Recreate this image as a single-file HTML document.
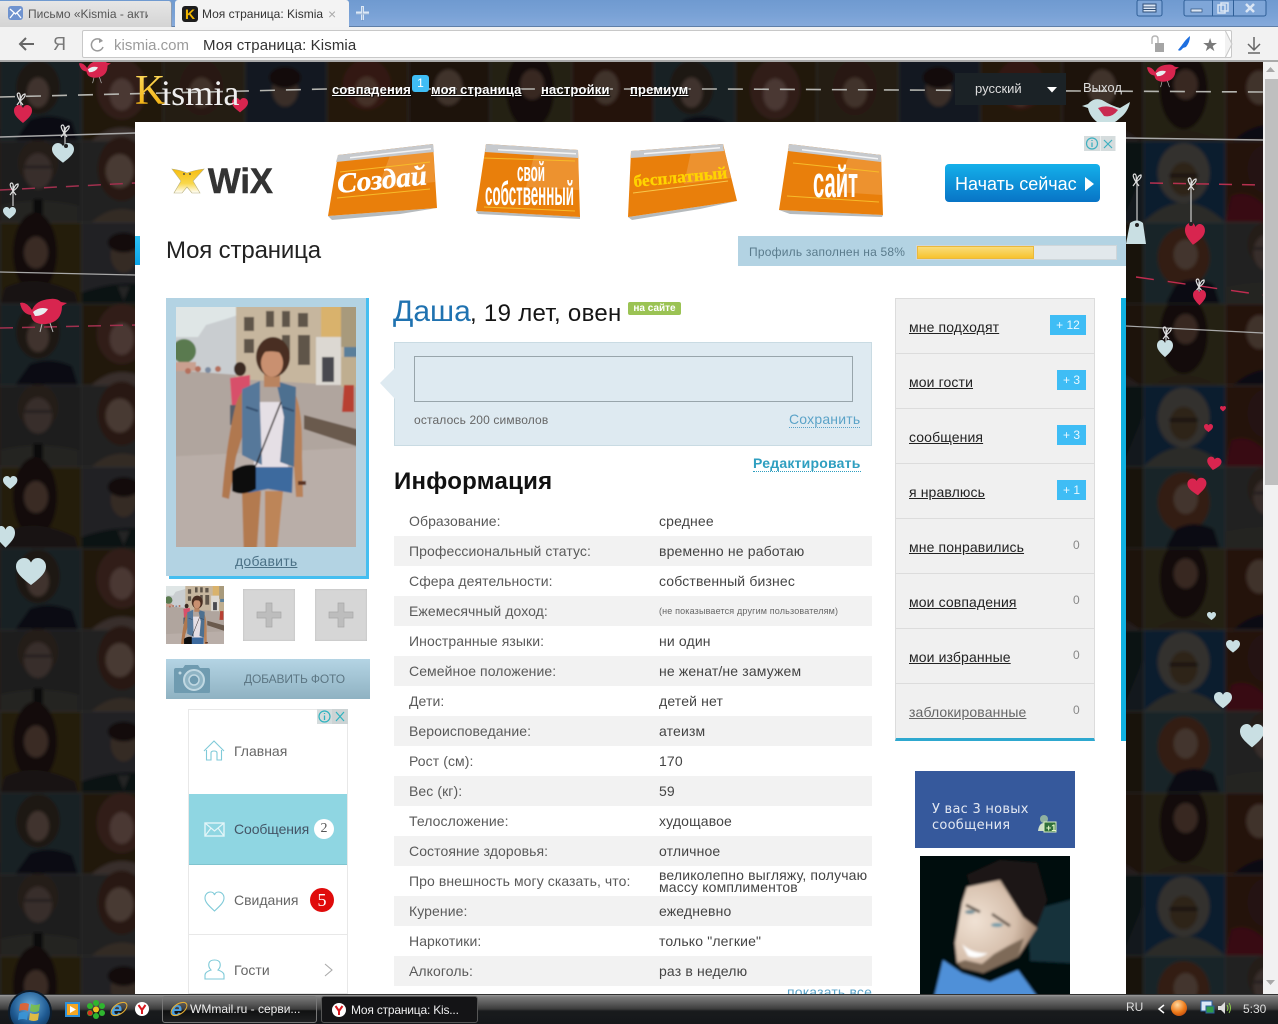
<!DOCTYPE html>
<html lang="ru"><head><meta charset="utf-8"><title>Моя страница: Kismia</title>
<style>
html,body{margin:0;padding:0;width:1278px;height:1024px;overflow:hidden;background:#1a1a1a;font-family:"Liberation Sans","Noto Sans CJK SC",sans-serif;}
*{box-sizing:border-box}
.a{position:absolute;white-space:nowrap}
svg.a{overflow:visible}
.row{position:absolute;left:394px;width:478px;height:30px;line-height:30px;font-size:14px}
.row.g{background:#f2f2f2}
.row b{position:absolute;left:15px;font-weight:normal;color:#5a5a5a;letter-spacing:.08px}
.row i{position:absolute;left:265px;font-style:normal;color:#444;letter-spacing:.15px}
.m{position:absolute;left:896px;width:198px;height:55px;border-bottom:1px solid #dcdcdc}
.m u{position:absolute;left:13px;top:20px;font-size:14px;line-height:17px;color:#222;letter-spacing:.12px}
.bd{position:absolute;right:8px;top:16px;height:20px;background:#3fbdf5;color:#e8f8ff;font-size:12px;line-height:20px;text-align:center}
.z{position:absolute;left:177px;top:18px;font-size:12px;line-height:16px;color:#888}
.n{font-weight:bold;font-size:13px;color:#fff;text-decoration:underline;text-shadow:1px 1px 1px #000;top:81px;line-height:17px;letter-spacing:.18px}
</style></head><body>

<!-- background -->
<svg class="a" style="left:0;top:0" width="1278" height="1024">
<defs>
<pattern id="tiles" patternUnits="userSpaceOnUse" x="0" y="59.5" width="653.5" height="244.5">
<g stroke="#3a3a3a" stroke-width=".6">
<rect x="0" y="0" width="81.7" height="81.5" fill="#1a272c"/><rect x="81.7" y="0" width="81.7" height="81.5" fill="#271c10"/><rect x="163.4" y="0" width="81.7" height="81.5" fill="#2a2212"/><rect x="245.1" y="0" width="81.7" height="81.5" fill="#141e26"/><rect x="326.8" y="0" width="81.7" height="81.5" fill="#2a1a10"/><rect x="408.5" y="0" width="81.7" height="81.5" fill="#221610"/><rect x="490.2" y="0" width="81.7" height="81.5" fill="#2b2512"/><rect x="571.9" y="0" width="81.7" height="81.5" fill="#2c120c"/>
<rect x="0" y="81.5" width="81.7" height="81.5" fill="#222"/><rect x="81.7" y="81.5" width="81.7" height="81.5" fill="#252525"/><rect x="408.5" y="81.5" width="81.7" height="81.5" fill="#0f1215"/><rect x="490.2" y="81.5" width="81.7" height="81.5" fill="#0d2235"/><rect x="571.9" y="81.5" width="81.7" height="81.5" fill="#2a130e"/>
<rect x="0" y="163" width="81.7" height="81.5" fill="#2a2110"/><rect x="81.7" y="163" width="81.7" height="81.5" fill="#262829"/><rect x="408.5" y="163" width="81.7" height="81.5" fill="#1a140c"/><rect x="490.2" y="163" width="81.7" height="81.5" fill="#1c2a2e"/><rect x="571.9" y="163" width="81.7" height="81.5" fill="#262626"/>
</g>
<!-- row 0 -->
<ellipse cx="38" cy="28" rx="22" ry="27" fill="#231c19"/><path d="M15 81 L30 60 Q50 52 72 62 L78 81Z" fill="#0e0f12"/><ellipse cx="38" cy="33" rx="11" ry="15" fill="#4a3b35"/>
<g transform="translate(81.7,0)"><ellipse cx="40" cy="30" rx="25" ry="30" fill="#37231a"/><path d="M10 81 Q40 55 72 81Z" fill="#3f3630"/><ellipse cx="40" cy="35" rx="12" ry="16" fill="#54413a"/></g>
<g transform="translate(163.4,0)"><ellipse cx="38" cy="28" rx="22" ry="28" fill="#2f1f15"/><path d="M8 81 Q40 55 74 81Z" fill="#2c2c20"/><ellipse cx="38" cy="33" rx="12" ry="15" fill="#4c3a30"/></g>
<g transform="translate(245.1,0)"><path d="M10 81 Q40 60 72 81Z" fill="#191c20"/><ellipse cx="40" cy="30" rx="13" ry="17" fill="#43362e"/><ellipse cx="40" cy="18" rx="16" ry="11" fill="#15110f"/></g>
<g transform="translate(326.8,0)"><ellipse cx="40" cy="25" rx="24" ry="25" fill="#3a1d12"/><path d="M8 81 Q40 58 74 81Z" fill="#1a1512"/><ellipse cx="40" cy="32" rx="12" ry="15" fill="#50392e"/></g>
<g transform="translate(408.5,0)"><path d="M5 81 Q40 50 77 81Z" fill="#2a2420"/><ellipse cx="40" cy="28" rx="14" ry="18" fill="#4a3a32"/></g>
<g transform="translate(490.2,0)"><ellipse cx="40" cy="30" rx="24" ry="40" fill="#17110f"/><path d="M8 81 Q40 62 74 81Z" fill="#2a2018"/><ellipse cx="42" cy="25" rx="12" ry="15" fill="#3f2f28"/></g>
<g transform="translate(571.9,0)"><path d="M8 81 Q35 55 81 70 L81 81Z" fill="#0f0f12"/><ellipse cx="34" cy="28" rx="13" ry="17" fill="#4a3a32"/></g>
<!-- row 1 -->
<g transform="translate(0,81.5)"><ellipse cx="38" cy="22" rx="20" ry="23" fill="#2b211c"/><path d="M0 81 L0 65 Q38 55 78 65 L78 81Z" fill="#2b2a27"/><ellipse cx="38" cy="30" rx="14" ry="18" fill="#3f3530"/><rect x="24" y="25" width="28" height="2" fill="#1a1a1a"/><rect x="33" y="58" width="10" height="23" fill="#0c0e10"/></g>
<g transform="translate(81.7,81.5)"><ellipse cx="40" cy="28" rx="24" ry="32" fill="#2e1e16"/><path d="M10 81 Q40 55 72 81Z" fill="#3a322c"/><ellipse cx="38" cy="30" rx="14" ry="17" fill="#53423a"/></g>
<g transform="translate(490.2,81.5)"><path d="M0 81 Q40 42 81 81Z" fill="#33312e"/><ellipse cx="40" cy="32" rx="26" ry="30" fill="#3a3835"/><ellipse cx="40" cy="38" rx="14" ry="17" fill="#35291f"/><rect x="26" y="33" width="28" height="3" fill="#15110f"/></g>
<g transform="translate(571.9,81.5)"><ellipse cx="40" cy="28" rx="18" ry="24" fill="#2a1512"/><path d="M0 81 L6 55 Q30 45 50 81Z" fill="#401012"/></g>
<g transform="translate(408.5,81.5)"><path d="M60 81 L81 81 L81 30Z" fill="#141a20"/></g>
<!-- row 2 -->
<g transform="translate(0,163)"><ellipse cx="35" cy="30" rx="22" ry="40" fill="#15100e"/><path d="M0 81 L5 65 Q35 50 75 70 L78 81Z" fill="#1c1412"/><ellipse cx="36" cy="30" rx="12" ry="16" fill="#43332c"/></g>
<g transform="translate(81.7,163)"><path d="M0 81 L0 70 Q40 55 81 65 L81 81Z" fill="#101218"/><path d="M36 64 L42 78 L48 64Z" fill="#2a2a2a"/><ellipse cx="42" cy="32" rx="13" ry="18" fill="#3e3129"/><ellipse cx="42" cy="20" rx="16" ry="10" fill="#141110"/></g>
<g transform="translate(490.2,163)"><ellipse cx="40" cy="35" rx="26" ry="30" fill="#3a2418"/><path d="M22 81 L32 62 Q50 52 70 62 L76 81Z" fill="#0f0f12"/><ellipse cx="42" cy="32" rx="12" ry="15" fill="#4d3c34"/></g>
<g transform="translate(571.9,163)"><ellipse cx="42" cy="22" rx="20" ry="23" fill="#2b211c"/><path d="M0 81 L0 65 Q38 55 81 65 L81 81Z" fill="#2b2a27"/><ellipse cx="42" cy="30" rx="14" ry="18" fill="#3f3530"/><rect x="28" y="25" width="28" height="2" fill="#1a1a1a"/></g>
</pattern>
<filter id="bl"><feGaussianBlur stdDeviation="1.5"/></filter>
<path id="h" d="M10 18 C2 12 0 9 0 5.5 C0 2 3 0 5.5 0 C7.5 0 9 1 10 3 C11 1 12.5 0 14.5 0 C17 0 20 2 20 5.5 C20 9 18 12 10 18Z"/>
<g id="bird"><path d="M0 5 Q6 3 12 12 Q16 2 30 1 Q37 0 41 4 L47 5 L42 8 Q42 24 26 26 Q12 27 11 17 Q2 16 0 5Z"/><path d="M13 14 Q20 8 28 11 Q24 18 15 18Z" fill="#e8eef0"/><path d="M22 26 L20 34 M30 25 L33 34" stroke="#bbb" fill="none"/></g>
<g id="bow" fill="none" stroke="#ddd" stroke-width="1.2"><path d="M0 8 Q-5 0 -1 0 Q1 1 0 8 Q2 1 5 1 Q6 4 0 8 M0 8 L-3 12 M0 8 L3 12"/></g>
</defs>
<rect x="-10" y="50" width="1290" height="950" fill="url(#tiles)" filter="url(#bl)"/>
<rect y="62" width="1263" height="932" fill="#000" opacity=".12"/>
<g fill="none">
<path d="M0 97 L326 89 L720 89 L1263 92" stroke="#b5b5b0" stroke-width="1.6" stroke-dasharray="15 11"/>
<path d="M0 137 L135 133" stroke="#a8a8a8" stroke-width="1.5"/>
<path d="M1126 138 L1263 140" stroke="#a8a8a8" stroke-width="1.5"/>
<path d="M0 190 L135 183" stroke="#a0304e" stroke-width="1.5" stroke-dasharray="13 9"/>
<path d="M1150 183 L1263 185" stroke="#b5304f" stroke-width="1.5" stroke-dasharray="13 10"/>
<path d="M0 272 L135 275" stroke="#a8a8a8" stroke-width="1.3"/>
<path d="M0 328 L135 325" stroke="#a0304e" stroke-width="1.5" stroke-dasharray="13 9"/>
<path d="M1136 277 L1263 295" stroke="#c02c50" stroke-width="1.4" stroke-dasharray="18 14"/>
<path d="M1126 326 L1263 333" stroke="#a8a8a8" stroke-width="1.2"/>
<path d="M20 95 L21 106 M65 127 L65 145 M13 186 L13 206 M1137 178 L1137 222 M1191 182 L1191 226 M1199 282 L1199 292 M1166 330 L1166 342" stroke="#ccc" stroke-width="1.2"/>
</g>
<use href="#bow" transform="translate(20,93)"/><use href="#bow" transform="translate(64,125)"/><use href="#bow" transform="translate(13,183)"/><use href="#bow" transform="translate(1136,174)"/><use href="#bow" transform="translate(1191,178)"/><use href="#bow" transform="translate(1199,279)"/><use href="#bow" transform="translate(1166,327)"/>
<g fill="#d8254f">
<use href="#h" transform="translate(14,105) scale(.9,1)"/>
<use href="#bird" transform="translate(20,298)"/>
<use href="#bird" transform="translate(79,60) scale(.68)"/>
<use href="#bird" transform="translate(1147,64) scale(.68)"/>
<use href="#h" transform="translate(1186,222) rotate(8) scale(1,1.2)"/>
<use href="#h" transform="translate(1193,290) scale(.65,.85)"/>
<use href="#h" transform="translate(1220,406) scale(.3)"/>
<use href="#h" transform="translate(1204,424) scale(.45)"/>
<use href="#h" transform="translate(1208,456) rotate(10) scale(.72)"/>
<use href="#h" transform="translate(1187,479) rotate(-5) scale(.95)"/>
<use href="#h" transform="translate(232,98) scale(.8)"/>
</g>
<g fill="#c9dfe3">
<use href="#h" transform="translate(52,143) scale(1.1)"/>
<use href="#h" transform="translate(3,207) scale(.65)"/>
<use href="#h" transform="translate(3,476) scale(.72)"/>
<use href="#h" transform="translate(-4,526) scale(.95,1.2)"/>
<use href="#h" transform="translate(16,558) scale(1.5)"/>
<use href="#h" transform="translate(1157,340) scale(.8,.95)"/>
<use href="#h" transform="translate(1207,612) scale(.45)"/>
<use href="#h" transform="translate(1226,640) scale(.7)"/>
<use href="#h" transform="translate(1214,692) scale(.9)"/>
<use href="#h" transform="translate(1240,724) scale(1.2,1.3)"/>
<path d="M1130 223 Q1137 218 1143 223 L1146 244 L1126 244Z"/>
</g>
<!-- pale bird by logout -->
<path d="M1082 106 L1088 104 Q1094 97 1102 100 Q1112 106 1120 108 L1130 102 Q1128 112 1120 118 Q1110 128 1100 124 Q1090 118 1088 108Z" fill="#c9e0e2"/>
<path d="M1098 108 Q1108 104 1118 110 Q1112 118 1104 116Z" fill="#c92a50"/>
<circle cx="66" cy="146" r="2" fill="#222"/><circle cx="1137" cy="225" r="2" fill="#222"/><circle cx="1191" cy="224" r="2" fill="#222"/>
</svg>

<!-- browser chrome -->
<div class="a" style="left:0;top:0;width:1278px;height:27px;background:linear-gradient(#6f9ad0,#7aa2d6 60%,#86aadb);border-bottom:1px solid #5f7fa8"></div>
<div class="a" style="left:0;top:1px;width:172px;height:26px;background:linear-gradient(#e6e6e6,#d4d4d4);border-right:1px solid #8a9ab0;border-radius:0 3px 0 0"></div>
<div class="a" style="left:175px;top:0;width:174px;height:28px;background:#f3f3f3;border-radius:3px 3px 0 0"></div>
<div class="a" style="left:0;top:27px;width:1278px;height:35px;background:#f2f2f2;border-bottom:2px solid #a9a9a9"></div>
<div class="a" style="left:28px;top:6px;font-size:12px;line-height:16px;color:#555;width:120px;overflow:hidden">Письмо «Kismia - акти</div>
<div class="a" style="left:202px;top:6px;font-size:12px;line-height:16px;color:#333">Моя страница: Kismia</div>
<div class="a" style="left:182px;top:6px;width:16px;height:16px;background:#1c1c1c;border-radius:3px;color:#f0b400;font:bold 14px/16px 'Liberation Sans',sans-serif;text-align:center">K</div>
<div class="a" style="left:328px;top:6px;font-size:14px;line-height:16px;color:#aaa">×</div>
<div class="a" style="left:82px;top:30px;width:1150px;height:28px;background:#fff;border:1px solid #c8c8c8;border-radius:2px"></div>
<div class="a" style="left:114px;top:37px;font-size:15px;line-height:18px;color:#9b9b9b">kismia.com</div>
<div class="a" style="left:203px;top:37px;font-size:15px;line-height:18px;color:#333;letter-spacing:.1px">Моя страница: Kismia</div>
<div class="a" style="left:53px;top:34px;font-size:18px;line-height:20px;color:#777">Я</div>
<svg class="a" style="left:0;top:0" width="1278" height="62">
<rect x="8" y="6" width="15" height="14" rx="3" fill="#6f93cf"/><path d="M10 9 L15.5 14 L21 9 M10 18 L14 13 M21 18 L17 13" stroke="#fff" fill="none" stroke-width="1.3"/>
<path d="M356 13 H369 M362.5 6 V20" stroke="#dce8f6" stroke-width="3"/><path d="M356 13 H369 M362.5 6 V20" stroke="#5f86b8" stroke-width="1" fill="none" transform="translate(0,1)" opacity=".5"/>
<g fill="none" stroke="#666" stroke-width="2"><path d="M34 44 H20 M26 38 L20 44 L26 50"/></g>
<path d="M102 41 A6 6 0 1 0 103 47" fill="none" stroke="#999" stroke-width="1.5"/><path d="M99 38 L103 41 L99 43Z" fill="#999"/>
<rect x="1155" y="43" width="9" height="9" fill="#a5a5a5"/><path d="M1152 44 V39 Q1152 36 1155 36 Q1158 36 1158 39 V43" fill="none" stroke="#b5b5b5" stroke-width="1.4"/>
<path d="M1190 37 L1185 47 L1182 45Z" fill="#1e6fe0"/><path d="M1190 36 Q1186 39 1182 45 L1178 50 Q1180 52 1183 48 L1186 47 Q1190 42 1190 36Z" fill="#1e6fe0"/>
<text x="1202" y="51" font-size="18" fill="#7a7a7a" font-family="DejaVu Sans">★</text>
<path d="M1254 37 V49 M1248 44 L1254 50 L1260 44 M1248 53 H1260" stroke="#666" fill="none" stroke-width="1.5"/>
<path d="M1225 30 L1232 44 L1225 58" fill="#f2f2f2" stroke="#c8c8c8"/>
<g stroke="#2f5f97" fill="#7fa6d8">
<rect x="1137" y="0" width="25" height="16" rx="2"/><rect x="1184" y="0" width="82" height="16" rx="2"/>
</g>
<path d="M1143 4 H1156 V12 H1143Z M1143 7 H1156 M1143 9.5 H1156" fill="#dbe6f4" stroke="#2f4f77"/>
<path d="M1212.500 0 V16 M1233.500 0 V16" stroke="#2f5f97"/>
<rect x="1191" y="9" width="11" height="3" fill="#dbe6f4" stroke="#2f4f77" stroke-width=".7"/>
<rect x="1218" y="5" width="7" height="8" fill="none" stroke="#dbe6f4" stroke-width="1.5"/><rect x="1221" y="3" width="7" height="8" fill="none" stroke="#dbe6f4" stroke-width="1.5"/>
<path d="M1246 4 L1254 12 M1254 4 L1246 12" stroke="#dbe6f4" stroke-width="2.5"/>
</svg>

<!-- scrollbar -->
<div class="a" style="left:1263px;top:62px;width:15px;height:932px;background:#f1f1f1"></div>
<div class="a" style="left:1265px;top:79px;width:13px;height:406px;background:#bfbfbf"></div>
<svg class="a" style="left:1263px;top:62px" width="15" height="932"><path d="M7.500 5 L12 10 H3Z M3 918 H12 L7.500 923Z" fill="#a8a8a8"/></svg>

<!-- site header -->
<div class="a" style="left:135px;top:68px;font:42px/46px 'Liberation Serif',serif;color:#f4c20d;background:linear-gradient(#ffe066,#f0a800);-webkit-background-clip:text;background-clip:text;-webkit-text-fill-color:transparent">K</div>
<div class="a" style="left:161px;top:73px;font:36px/40px 'Liberation Serif',serif;color:#eee;letter-spacing:.1px">ismia</div>
<div class="a n" style="left:332px">совпадения</div>
<div class="a" style="left:412px;top:75px;width:17px;height:17px;background:#3fbdf5;border-radius:3px;color:#fff;font-size:12px;line-height:17px;text-align:center">1</div>
<div class="a n" style="left:431px">моя страница</div>
<div class="a n" style="left:541px">настройки</div>
<div class="a n" style="left:630px">премиум</div>
<div class="a" style="left:955px;top:73px;width:111px;height:32px;background:#1b2226"></div>
<div class="a" style="left:975px;top:81px;font-size:13px;line-height:16px;color:#ddd">русский</div>
<svg class="a" style="left:1047px;top:87px" width="10" height="6"><path d="M0 0 H10 L5 5.500Z" fill="#fff"/></svg>
<div class="a" style="left:1083px;top:80px;font-size:13px;line-height:16px;color:#ddd">Выход</div>

<!-- page -->
<div class="a" style="left:135px;top:122px;width:991px;height:872px;background:#fff"></div>

<!-- banner -->
<svg class="a" style="left:0;top:0" width="1278" height="240">
<defs>
<linearGradient id="wg" x1="0" y1="0" x2="0" y2="1"><stop offset="0" stop-color="#f6bc10"/><stop offset=".6" stop-color="#f9d84a"/><stop offset="1" stop-color="#fff"/></linearGradient>
<linearGradient id="btn" x1="0" y1="0" x2="0" y2="1"><stop offset="0" stop-color="#14b0ea"/><stop offset="1" stop-color="#0874c6"/></linearGradient>
</defs>
<path d="M172 169 Q180 170 187 173 Q195 170 204 169 L193 181 L200 193 L192 193 L187 187 L182 193 L174 193 L181 181Z" fill="url(#wg)" stroke="#b9b07a" stroke-width=".6"/>
<circle cx="184" cy="174" r="1" fill="#554"/><circle cx="190" cy="174" r="1" fill="#554"/>
<text x="208" y="193" font-size="35" font-weight="bold" fill="#333" stroke="#333" stroke-width=".5" font-family="Liberation Sans" textLength="65" lengthAdjust="spacingAndGlyphs">WiX</text>

<!-- card1 -->
<path d="M328 216 L437 208 L400 214 L332 220Z" fill="#b5babd"/>
<path d="M338 155 L433 144 L437 208 L328 216Z" fill="#e97f0b"/>
<path d="M392 150 L433 145 L435 182 L378 188Z" fill="#ee9a3e" opacity=".75"/>
<path d="M338 155 L433 144 L434 152 L336 162Z" fill="#c6c9cd"/><path d="M350 157 L431 148 L431 149.500 L350 158.500Z" fill="#fff" opacity=".8"/>
<path d="M340 172 L430 162 M337 198 L430 189" stroke="#f7bb2a" stroke-width="1"/>
<text transform="translate(338,193) rotate(-5.500)" font-family="Liberation Serif" font-size="28" font-weight="bold" font-style="italic" fill="#fff" stroke="#fff" stroke-width=".4" textLength="90" lengthAdjust="spacingAndGlyphs">Создай</text>
<!-- card2 -->
<path d="M476 211 L580 217 L580 219 L478 214Z" fill="#b5babd"/>
<path d="M486 144 L578 150 L580 217 L476 211Z" fill="#e97f0b"/>
<path d="M536 148 L578 150 L579 190 L526 187Z" fill="#ee9a3e" opacity=".7"/>
<path d="M486 144 L578 150 L578 158 L485 152Z" fill="#c6c9cd"/><path d="M498 149 L576 153 L576 154.500 L498 150.500Z" fill="#fff" opacity=".8"/>
<path d="M484 158 L575 161 M484 207 L575 211" stroke="#f7bb2a" stroke-width="1"/>
<text x="517" y="181" font-family="Liberation Sans" font-size="27" font-weight="bold" fill="#fff" textLength="28" lengthAdjust="spacingAndGlyphs">свой</text>
<text x="485" y="205" font-family="Liberation Sans" font-size="33" font-weight="bold" fill="#fff" textLength="89" lengthAdjust="spacingAndGlyphs">собственный</text>
<!-- card3 -->
<path d="M628 217 L737 201 L700 209 L632 220Z" fill="#b5babd"/>
<path d="M631 151 L723 144 L737 201 L628 217Z" fill="#e97f0b"/>
<path d="M692 147 L723 144 L731 178 L684 184Z" fill="#ee9a3e" opacity=".7"/>
<path d="M631 151 L723 144 L724 151 L631 158Z" fill="#c6c9cd"/><path d="M644 153 L720 147 L720 148.500 L644 154.500Z" fill="#fff" opacity=".8"/>
<path d="M633 193 L728 181" stroke="#f7c74a" stroke-width="1"/>
<text transform="translate(634,187) rotate(-5.500)" font-family="Liberation Serif" font-size="17" font-weight="bold" fill="#ffd400" stroke="#ffd400" stroke-width=".3" textLength="94" lengthAdjust="spacingAndGlyphs">бесплатный</text>
<!-- card4 -->
<path d="M779 210 L883 215 L882 217 L790 214Z" fill="#b5babd"/>
<path d="M789 144 L881 155 L883 215 L779 210Z" fill="#e97f0b"/>
<path d="M850 152 L881 155 L882 195 L836 192Z" fill="#ee9a3e" opacity=".7"/>
<path d="M789 144 L881 155 L881 162 L788 151Z" fill="#c6c9cd"/><path d="M802 149 L878 158 L878 159.500 L802 150.500Z" fill="#fff" opacity=".8"/>
<path d="M793 163 L879 172 M787 196 L879 202" stroke="#f7bb2a" stroke-width="1"/>
<text x="813" y="197" font-family="Liberation Sans" font-size="44" font-weight="bold" fill="#fff" textLength="45" lengthAdjust="spacingAndGlyphs">сайт</text>
<!-- button -->
<rect x="945" y="164" width="155" height="38" rx="4" fill="url(#btn)"/>
<path d="M1085 177 L1094 184 L1085 191Z" fill="#fff"/>
<text x="955" y="190" font-family="Liberation Sans" font-size="18" fill="#fff">Начать сейчас</text>
<!-- adchoices -->
<rect x="1084" y="136" width="16" height="15" fill="#d5dcdd"/><rect x="1100.500" y="136" width="15" height="15" fill="#d5dcdd"/>
<circle cx="1092" cy="143.500" r="5.500" fill="none" stroke="#3fb0c0" stroke-width="1.2"/><path d="M1092 140 V141 M1092 142.500 V147" stroke="#3fb0c0" stroke-width="1.3"/>
<path d="M1104 140 L1112 148 M1112 140 L1104 148" stroke="#3fb0c0" stroke-width="1.2"/>
</svg>

<!-- title -->
<div class="a" style="left:135px;top:236px;width:5px;height:29px;background:linear-gradient(#2ec2f5,#0aa4e8)"></div>
<div class="a" style="left:166px;top:237px;font-size:24px;line-height:28px;color:#222;letter-spacing:-.15px">Моя страница</div>
<div class="a" style="left:738px;top:236px;width:388px;height:30px;background:#b3d3e3"></div>
<div class="a" style="left:749px;top:245px;font-size:12px;line-height:15px;color:#5a7b8c;letter-spacing:.22px">Профиль заполнен на 58%</div>
<div class="a" style="left:916px;top:245px;width:201px;height:15px;background:#e2e8ec;border:1px solid #cfd6da"></div>
<div class="a" style="left:917px;top:246px;width:117px;height:13px;background:linear-gradient(#f9dc7a,#f8c32f);border:1px solid #eab93c"></div>

<!-- photo box -->
<div class="a" style="left:166px;top:298px;width:200px;height:278px;background:#b3d3e3"></div>
<div class="a" style="left:366px;top:298px;width:3px;height:281px;background:#45bef0"></div>
<div class="a" style="left:169px;top:576px;width:200px;height:3px;background:#45bef0"></div>
<svg class="a" style="left:176px;top:307px;overflow:hidden" width="180" height="240" viewBox="0 0 180 240">
<defs><filter id="pb" x="-10%" y="-10%" width="120%" height="120%"><feGaussianBlur stdDeviation=".7"/></filter>
<g id="girl" filter="url(#pb)">
<rect x="-15" y="-15" width="210" height="270" fill="#b0a59e"/>
<rect x="-15" y="-15" width="85" height="55" fill="#dfe6e6"/>
<path d="M-15 30 L22 30 L30 18 L50 12 L62 8 L62 68 L-15 62Z" fill="#c9cdd0"/>
<path d="M60 -15 H195 V80 L60 72Z" fill="#c6b69e"/>
<rect x="145" y="-15" width="20" height="45" fill="#d9b26c"/>
<rect x="140" y="30" width="25" height="48" fill="#dcd8d2"/>
<rect x="146" y="50" width="12" height="25" fill="#4a4a50"/>
<rect x="165" y="-15" width="30" height="55" fill="#a89a7c"/>
<rect x="168" y="40" width="27" height="10" fill="#5a7f9a"/>
<rect x="165" y="50" width="30" height="30" fill="#bfae90"/>
<g fill="#5f5548"><rect x="68" y="10" width="10" height="14"/><rect x="68" y="32" width="10" height="14"/><rect x="90" y="4" width="8" height="16"/><rect x="106" y="4" width="8" height="16"/><rect x="122" y="6" width="10" height="14"/><rect x="122" y="28" width="12" height="30"/><rect x="106" y="28" width="8" height="20"/></g>
<ellipse cx="8" cy="44" rx="12" ry="12" fill="#5a7a50"/>
<g fill="#b5705c"><rect x="-15" y="55" width="35" height="9" fill="#c9a090"/><circle cx="12" cy="64" r="3"/><circle cx="22" cy="62" r="3"/><circle cx="32" cy="63" r="3" fill="#7a8aa0"/><circle cx="42" cy="62" r="3"/></g>
<path d="M128 108 L195 126 V144 L128 122Z" fill="#6a5a4e"/>
<path d="M-15 150 L195 140 V255 H-15Z" fill="#b9aea8"/>
<ellipse cx="64" cy="62" rx="6" ry="7" fill="#3a2a22"/><path d="M54 71 L74 68 L74 92 L56 100Z" fill="#d8506a"/><rect x="54" y="98" width="10" height="20" fill="#555d6b"/>
<path d="M168 78 L178 78 L178 105 L166 105Z" fill="#b84030"/>
<path d="M46 190 Q50 140 58 105 Q62 86 70 82 L72 110 L60 150 L53 192Z" fill="#b07850"/>
<path d="M118 85 Q127 100 126 150 L127 190 L120 190 L116 130Z" fill="#b98258"/>
<path d="M66 184 H85 L80 255 H68Z" fill="#b37a50"/><path d="M89 184 H107 L100 255 H89Z" fill="#bd8558"/>
<rect x="78" y="95" width="34" height="65" fill="#e5dfe5"/>
<path d="M66 82 L84 74 L84 100 L86 158 L66 148Z" fill="#56789a"/><path d="M100 74 L120 80 L118 160 L104 155 L108 110Z" fill="#4e6f90"/>
<path d="M70 100 L82 104 M106 100 L118 104" stroke="#35506e" stroke-width="2"/>
<path d="M72 160 H117 L116 186 L92 182 L72 186Z" fill="#3d6a9e"/>
<path d="M105 95 L80 158" stroke="#2a2220" stroke-width="1.5"/>
<path d="M56 164 Q66 156 80 158 L80 182 Q66 190 56 184Z" fill="#111"/>
<rect x="88" y="66" width="16" height="14" fill="#b9835f"/>
<ellipse cx="97" cy="50" rx="17" ry="20" fill="#4a2e20"/>
<ellipse cx="96" cy="56" rx="11" ry="14" fill="#c99070"/>
<path d="M84 46 Q95 32 110 48 Q98 42 84 46Z" fill="#4a2e20"/>
<rect x="122" y="174" width="8" height="4" fill="#5a3020"/>
</g></defs>
<use href="#girl"/>
</svg>
<div class="a" style="left:235px;top:553px;font-size:14px;line-height:16px;color:#4b7186;text-decoration:underline;letter-spacing:.25px">добавить</div>
<svg class="a" style="left:166px;top:586px;overflow:hidden" width="58" height="58" viewBox="0 0 180 180"><use href="#girl"/></svg>
<div class="a" style="left:243px;top:589px;width:52px;height:52px;background:#d6d6d6;box-shadow:inset 0 0 2px #bbb"></div>
<div class="a" style="left:315px;top:589px;width:52px;height:52px;background:#d6d6d6;box-shadow:inset 0 0 2px #bbb"></div>
<svg class="a" style="left:243px;top:589px" width="124" height="52"><path d="M14 23 H23 V14 H29 V23 H38 V29 H29 V38 H23 V29 H14Z M86 23 H95 V14 H101 V23 H110 V29 H101 V38 H95 V29 H86Z" fill="#bdbdbd" stroke="#a8a8a8" stroke-width=".7"/></svg>
<div class="a" style="left:166px;top:659px;width:204px;height:40px;background:linear-gradient(#b4d4e4,#8fb2c2)"></div>
<svg class="a" style="left:174px;top:664px" width="36" height="30"><path d="M2 4 H9 L11 1 H24 L26 4 H34 Q36 4 36 6 V28 Q36 29 34 29 H2 Q0 29 0 28 V6 Q0 4 2 4Z" fill="#6f9bb0"/><circle cx="20" cy="16" r="10" fill="#8fb4c4" stroke="#c0d8e2" stroke-width="2"/><circle cx="20" cy="16" r="5" fill="#6f9bb0" stroke="#c0d8e2" stroke-width="1.500"/><circle cx="6" cy="9" r="1.500" fill="#c0d8e2"/></svg>
<div class="a" style="left:244px;top:672px;font-size:12px;line-height:15px;color:#5c7683;letter-spacing:-.15px">ДОБАВИТЬ ФОТО</div>

<!-- left ad -->
<div class="a" style="left:188px;top:709px;width:160px;height:285px;background:#fff;border:1px solid #e8e8e8"></div>
<div class="a" style="left:189px;top:794px;width:158px;height:71px;background:#8fd6e2;border-bottom:1px solid #7fc4cf"></div>
<div class="a" style="left:189px;top:934px;width:158px;height:1px;background:#e8e8e8"></div>
<div class="a" style="left:234px;top:743px;font-size:14px;line-height:16px;color:#666">Главная</div>
<div class="a" style="left:234px;top:821px;font-size:14px;line-height:16px;color:#456;letter-spacing:-.1px">Сообщения</div>
<div class="a" style="left:234px;top:892px;font-size:14px;line-height:16px;color:#666">Свидания</div>
<div class="a" style="left:234px;top:962px;font-size:14px;line-height:16px;color:#666">Гости</div>
<div class="a" style="left:314px;top:819px;width:20px;height:20px;border-radius:50%;background:#fff;color:#555;font:14px/20px 'Liberation Serif',serif;text-align:center">2</div>
<div class="a" style="left:310px;top:888px;width:24px;height:24px;border-radius:50%;background:#e00b0b;color:#fff;font:18px/24px 'Liberation Serif',serif;text-align:center">5</div>
<svg class="a" style="left:0;top:0" width="400" height="994">
<g fill="none" stroke="#7fcad8" stroke-width="1.1">
<path d="M204 751 L214 741 L224 751 M206.500 750 V760 H211 V753 Q211 751 214 751 Q217 751 217 753 V760 H221.500 V750"/>
<rect x="205" y="823" width="19" height="13" stroke="#e4f6f9" stroke-width="1.4"/><path d="M205 823 L214.500 831 L224 823 M205 836 L211 828 M224 836 L218 828" stroke="#e4f6f9" stroke-width="1.200"/>
<path d="M214.500 911 C208 905 205 902 205 898 C205 894 208 892 210.500 892 C212.500 892 214 893 214.500 895 C215 893 216.500 892 218.500 892 C221 892 224 894 224 898 C224 902 221 905 214.500 911Z"/>
<path d="M205 979 V975 Q205 972 211 970 Q208 967 209 963 Q210 960 214.500 960 Q219 960 220 963 Q221 967 218 970 Q224 972 224 975 V979Z"/>
<path d="M325 964 L332 970 L325 976" stroke="#aaa"/>
</g>
<rect x="317" y="709" width="15" height="15" fill="#d5dcdd"/><rect x="332" y="709" width="16" height="15" fill="#ccd3d4"/>
<circle cx="324.500" cy="716.500" r="5.500" fill="none" stroke="#2fb3bf" stroke-width="1.200"/><path d="M324.500 713 V714 M324.500 715.500 V720" stroke="#2fb3bf" stroke-width="1.300"/>
<path d="M336 712 L344 721 M344 712 L336 721" stroke="#2fb3bf" stroke-width="1.200"/>
</svg>

<!-- center -->
<div class="a" style="left:393px;top:294px;font-size:30px;line-height:36px;color:#1f72b0">Даша</div>
<div class="a" style="left:470px;top:299px;font-size:24px;line-height:30px;color:#151515;letter-spacing:.3px">, 19 лет, овен</div>
<div class="a" style="left:628px;top:302px;width:53px;height:13px;background:#9bc354;border-radius:2px;color:#fff;font-weight:bold;font-size:10px;line-height:13px;text-align:center">на сайте</div>
<div class="a" style="left:394px;top:342px;width:478px;height:104px;background:#deeaf1;border:1px solid #c9dbe3"></div>
<svg class="a" style="left:380px;top:368px" width="15" height="32"><path d="M15 0 L0 15 L15 31Z" fill="#deeaf1"/></svg>
<div class="a" style="left:414px;top:356px;width:439px;height:46px;border:1px solid #98a5ab"></div>
<div class="a" style="left:414px;top:413px;font-size:12px;line-height:15px;color:#666;letter-spacing:.15px">осталось 200 символов</div>
<div class="a" style="left:789px;top:411px;font-size:14px;line-height:16px;color:#5ba3c8;border-bottom:1px dotted #5ba3c8;letter-spacing:.2px">Сохранить</div>
<div class="a" style="left:753px;top:455px;font-size:14px;font-weight:bold;line-height:16px;color:#2f9fc0;border-bottom:1px dotted #2f9fc0;letter-spacing:.22px">Редактировать</div>
<div class="a" style="left:394px;top:467px;font-size:24px;font-weight:bold;line-height:30px;color:#111;letter-spacing:.27px">Информация</div>

<div class="row" style="top:506px"><b>Образование:</b><i>среднее</i></div>
<div class="row g" style="top:536px"><b>Профессиональный статус:</b><i>временно не работаю</i></div>
<div class="row" style="top:566px"><b>Сфера деятельности:</b><i>собственный бизнес</i></div>
<div class="row g" style="top:596px"><b>Ежемесячный доход:</b><i style="font-size:9px;color:#666;letter-spacing:.16px">(не показывается другим пользователям)</i></div>
<div class="row" style="top:626px"><b>Иностранные языки:</b><i>ни один</i></div>
<div class="row g" style="top:656px"><b>Семейное положение:</b><i>не женат/не замужем</i></div>
<div class="row" style="top:686px"><b>Дети:</b><i>детей нет</i></div>
<div class="row g" style="top:716px"><b>Вероисповедание:</b><i>атеизм</i></div>
<div class="row" style="top:746px"><b>Рост (см):</b><i>170</i></div>
<div class="row g" style="top:776px"><b>Вес (кг):</b><i>59</i></div>
<div class="row" style="top:806px"><b>Телосложение:</b><i>худощавое</i></div>
<div class="row g" style="top:836px"><b>Состояние здоровья:</b><i>отличное</i></div>
<div class="row" style="top:866px"><b>Про внешность могу сказать, что:</b><i style="line-height:12px;top:3px;white-space:nowrap">великолепно выгляжу, получаю<br>массу комплиментов</i></div>
<div class="row g" style="top:896px"><b>Курение:</b><i>ежедневно</i></div>
<div class="row" style="top:926px"><b>Наркотики:</b><i>только "легкие"</i></div>
<div class="row g" style="top:956px"><b>Алкоголь:</b><i>раз в неделю</i></div>
<div class="a" style="left:787px;top:985px;font-size:14px;line-height:15px;color:#5ba3c8;border-bottom:1px dotted #5ba3c8;letter-spacing:.17px">показать все</div>

<!-- right menu -->
<div class="a" style="left:895px;top:298px;width:200px;height:443px;background:#f0f0f0;border:1px solid #dcdcdc;border-bottom:3px solid #2ea8cf"></div>
<div class="m" style="top:299px"><u>мне подходят</u><span class="bd" style="width:36px">+ 12</span></div>
<div class="m" style="top:354px"><u>мои гости</u><span class="bd" style="width:29px">+ 3</span></div>
<div class="m" style="top:409px"><u>сообщения</u><span class="bd" style="width:29px">+ 3</span></div>
<div class="m" style="top:464px"><u>я нравлюсь</u><span class="bd" style="width:29px">+ 1</span></div>
<div class="m" style="top:519px"><u>мне понравились</u><span class="z">0</span></div>
<div class="m" style="top:574px"><u>мои совпадения</u><span class="z">0</span></div>
<div class="m" style="top:629px"><u>мои избранные</u><span class="z">0</span></div>
<div class="m" style="top:684px;border:0;height:53px"><u style="color:#666">заблокированные</u><span class="z">0</span></div>
<div class="a" style="left:1121px;top:298px;width:5px;height:443px;background:#10b2e2"></div>

<div class="a" style="left:915px;top:771px;width:160px;height:77px;background:#36599c"></div>
<div class="a" style="left:932px;top:802px;font:13px/16px 'DejaVu Sans',sans-serif;color:#e3e8f2;letter-spacing:.25px">У вас 3 новых<br>сообщения</div>
<svg class="a" style="left:1037px;top:814px" width="20" height="20"><circle cx="7" cy="5" r="4" fill="#8fb0a0"/><path d="M1 17 Q2 9 7 9 L10 17Z" fill="#cfe0c8"/><rect x="7" y="8" width="12" height="10" fill="#2f6f3a" stroke="#d9f0c0"/><text x="9" y="17" font-size="9" font-weight="bold" fill="#e6f8c8" font-family="Liberation Sans">+1</text></svg>
<svg class="a" style="left:920px;top:856px;overflow:hidden" width="150" height="138" viewBox="0 0 150 138">
<defs><filter id="mb" x="-10%" y="-10%" width="120%" height="120%"><feGaussianBlur stdDeviation="1.3"/></filter>
<radialGradient id="skin" gradientUnits="userSpaceOnUse" cx="55" cy="65" r="62"><stop offset="0" stop-color="#f0e2d4"/><stop offset=".65" stop-color="#d6bfac"/><stop offset="1" stop-color="#a08570"/></radialGradient></defs>
<g filter="url(#mb)">
<rect x="-15" y="-15" width="180" height="170" fill="#05090e"/>
<path d="M108 55 L165 40 V108 L110 105Z" fill="#14303a"/>
<path d="M12 150 L23 104 L42 117 L70 126 L98 114 L124 150Z" fill="#5090d8"/>
<path d="M47 19 L80 4 L117 7 L127 44 L117 71 L103 81 L102 61 L80 24 L50 29Z" fill="#1c1613"/>
<path d="M47 31 L80 24 L103 61 L117 72 L98 101 L63 117 L37 107 L35 87 L42 47Z" fill="url(#skin)"/>
<path d="M37 107 L42 112 L63 117 L98 101 L104 82 L88 90 L74 98 L62 108 L45 104Z" fill="#7e6a58"/>
<path d="M46 49 L60 56 M72 58 L90 70" stroke="#4a3c32" stroke-width="2.500"/>
<ellipse cx="50" cy="56" rx="5" ry="2" fill="#6f8f9a"/><ellipse cx="77" cy="69" rx="6" ry="2" fill="#6f9aa8"/>
<path d="M42 88 Q52 98 68 97 Q58 104 48 100Z" fill="#fff"/>
</g></svg>

<!-- taskbar -->
<div class="a" style="left:0;top:994px;width:1278px;height:30px;background:linear-gradient(#9a9a9a 0,#7a7a7a 2px,#5c5c5c 8px,#3c3c3c 14px,#191b1d 16px,#15171a 100%);border-top:1px solid #333"></div>
<div class="a" style="left:162px;top:996px;width:155px;height:27px;border:1px solid #777;border-radius:3px;background:linear-gradient(rgba(120,120,120,.55),rgba(60,60,60,.5) 50%,rgba(10,10,10,.6) 55%,rgba(40,40,40,.5))"></div>
<div class="a" style="left:321px;top:996px;width:157px;height:27px;border:1px solid #555;border-radius:3px;background:#141416"></div>
<div class="a" style="left:190px;top:1001px;font-size:12px;line-height:16px;color:#eee">WMmail.ru - серви...</div>
<div class="a" style="left:351px;top:1002px;font-size:12px;line-height:16px;color:#eee;letter-spacing:-.2px">Моя страница: Kis...</div>
<div class="a" style="left:1126px;top:1000px;font-size:12px;line-height:15px;color:#ddd">RU</div>
<div class="a" style="left:1243px;top:1002px;font-size:12px;line-height:15px;color:#ddd">5:30</div>
<svg class="a" style="left:0;top:985px" width="1278" height="39">
<defs>
<radialGradient id="orb" cx=".5" cy=".35" r=".7"><stop offset="0" stop-color="#6fb0dd"/><stop offset=".6" stop-color="#1f5a92"/><stop offset="1" stop-color="#0c2c4c"/></radialGradient>
<radialGradient id="fx" cx=".4" cy=".3" r=".8"><stop offset="0" stop-color="#ffd9a0"/><stop offset=".6" stop-color="#ee7a18"/><stop offset="1" stop-color="#b84510"/></radialGradient>
</defs>
<circle cx="30" cy="27" r="21" fill="url(#orb)" stroke="#0d1c2c" stroke-width="2"/>
<g transform="translate(0,4)" opacity=".9"><path d="M20 15 Q25 13 29 15 L28 22 Q24 20 19 22Z" fill="#e8612c"/><path d="M31 15 Q35 17 40 15 L39 22 Q35 24 30 22Z" fill="#7cc04a"/><path d="M19 24 Q24 22 28 24 L27 31 Q23 29 18 31Z" fill="#3a96d8"/><path d="M30 24 Q35 26 39 24 L38 31 Q34 33 29 31Z" fill="#f2c23a"/></g>
<rect x="65" y="17" width="15" height="15" fill="#2f8fd8"/><rect x="67" y="19" width="11" height="11" fill="#f6a623"/><path d="M70 21 L76 24.500 L70 28Z" fill="#fff"/>
<g fill="#2fb52f"><circle cx="96" cy="18" r="3"/><circle cx="102" cy="21" r="3"/><circle cx="102" cy="28" r="3"/><circle cx="96" cy="31" r="3"/><circle cx="90" cy="28" r="3"/><circle cx="90" cy="21" r="3"/></g><circle cx="96" cy="24.500" r="3" fill="#f0c020"/><circle cx="90" cy="28" r="2.500" fill="#d83020"/>
<text x="111" y="31" font-family="Liberation Sans" font-size="20" font-weight="bold" font-style="italic" fill="#4a9fe0">e</text><ellipse cx="119" cy="24" rx="9" ry="5" fill="none" stroke="#e9b030" stroke-width="1" transform="rotate(-35 119 24)"/>
<circle cx="142" cy="24" r="7" fill="#fff"/><path d="M138.500 20 L142 25 L145.500 20 M142 25 V29" stroke="#d8191f" stroke-width="2" fill="none"/>
<text x="171" y="31" font-family="Liberation Sans" font-size="20" font-weight="bold" font-style="italic" fill="#4a9fe0">e</text><ellipse cx="179" cy="24" rx="9" ry="5" fill="none" stroke="#e9b030" stroke-width="1" transform="rotate(-35 179 24)"/>
<circle cx="339" cy="25" r="7" fill="#fff"/><path d="M335.500 21 L339 26 L342.500 21 M339 26 V30" stroke="#d8191f" stroke-width="2" fill="none"/>
<path d="M1164 20 L1159 24 L1164 28" stroke="#fff" fill="none" stroke-width="1.500"/>
<circle cx="1179" cy="23" r="8" fill="url(#fx)"/>
<rect x="1201" y="16" width="11" height="10" fill="#dce8f6" stroke="#2a5fa0"/><rect x="1206" y="21" width="8" height="7" fill="#2f9a4a" stroke="#2a5fa0"/>
<path d="M1218 21 H1221 L1225 17 V29 L1221 25 H1218Z" fill="#ddd"/><path d="M1227 20 Q1229 23 1227 26" stroke="#8fd04a" fill="none"/><path d="M1229 18 Q1232 23 1229 28" stroke="#8fd04a" fill="none"/>
</svg>
</body></html>
